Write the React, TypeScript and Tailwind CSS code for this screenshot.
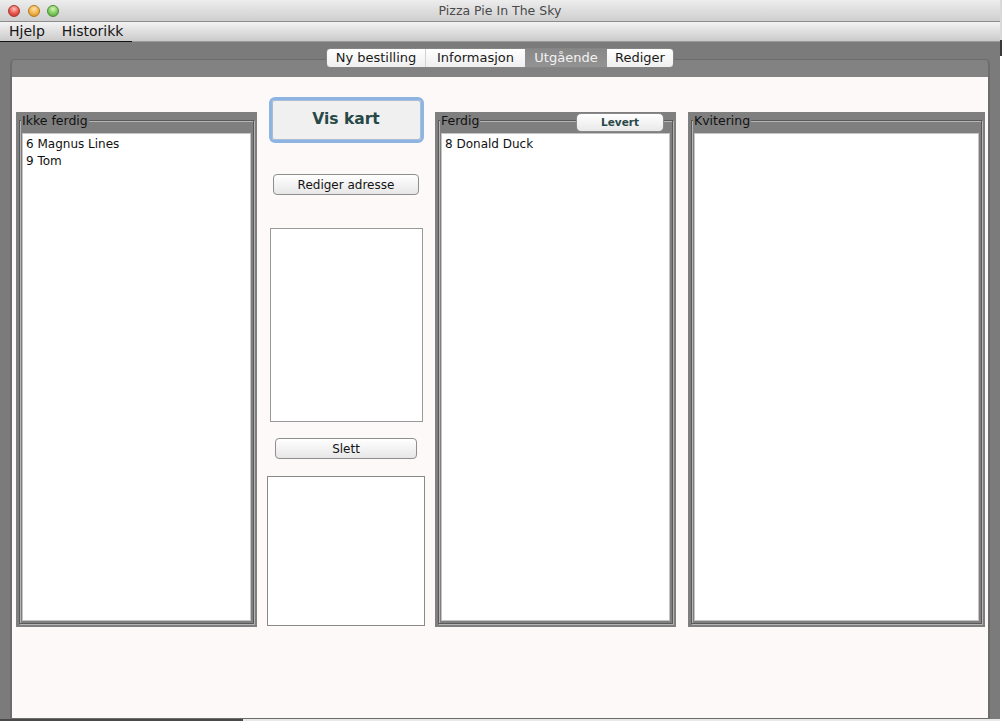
import React from "react";

function Light({ cls }: { cls: string }) {
  return <div className={`w-[12px] h-[12px] rounded-full ${cls}`} />;
}

function Panel({
  title,
  items,
  widthCls,
  listCls,
  children,
}: {
  title: string;
  items: string[];
  widthCls: string;
  listCls: string;
  children?: React.ReactNode;
}) {
  return (
    <div className={`relative mt-[35px] h-[515px] shrink-0 bg-[#7f7f7f] px-[3px] pt-[1px] ${widthCls}`}>
      <fieldset className="min-w-0 border border-[#5a5a5a] shadow-[inset_1px_1px_0_#b5b5b5,1px_1px_0_#b5b5b5] px-[2px] pt-[5px] pb-[2px]">
        <legend className="-ml-[1px] px-[1px] bg-[#7f7f7f] text-[12.5px] leading-[15px] text-[#121212]">
          {title}
        </legend>
        <div className={`h-[488px] bg-white border border-[#c4c4c4] px-[3px] pt-[2px] text-[12px] leading-[17px] text-[#111] ${listCls}`}>
          {items.map((it) => (
            <div key={it}>{it}</div>
          ))}
        </div>
      </fieldset>
      {children}
    </div>
  );
}

export default function App() {
  return (
    <div className="flex w-[1002px] h-[721px] overflow-hidden font-['DejaVu_Sans',sans-serif]">
      <div className="flex flex-col w-[1000px] h-full">
        {/* Title bar */}
        <div className="grid grid-cols-[1fr_auto_1fr] items-center h-[22px] border-b border-[#8c8c8c] bg-linear-to-b from-[#ededed] to-[#cfcfcf]">
          <div className="flex items-center gap-[7.5px] pl-[8px]">
            <Light cls="border border-[#a8382f] bg-[radial-gradient(circle_at_50%_30%,#ffc2bc_0%,#e8554c_55%,#b8322a_100%)]" />
            <Light cls="border border-[#b07a1e] bg-[radial-gradient(circle_at_50%_30%,#ffe2a8_0%,#f2b24a_55%,#c5861e_100%)]" />
            <Light cls="border border-[#4e8a34] bg-[radial-gradient(circle_at_50%_30%,#d2f5b8_0%,#7cc95c_55%,#4c9a32_100%)]" />
          </div>
          <div className="text-[12.5px] leading-[15px] text-[#4a4a4a]">Pizza Pie In The Sky</div>
          <div />
        </div>
        {/* Menu bar */}
        <div className="flex h-[20px] bg-linear-to-b from-[#f3f3f3] to-[#c8c8c8]">
          <div className="flex items-center w-[132px] h-full border-b border-[#111] text-[14px] text-[#161616] pl-[9px]">
            <span>Hjelp</span>
            <span className="ml-[17px]">Historikk</span>
          </div>
          <div className="flex-1 border-b border-[#9a9a9a]" />
        </div>
        {/* Body */}
        <div className="flex flex-col flex-1 bg-[#7b7b7b] px-[10px] pt-[6px]">
          <div className="relative z-10 flex justify-center h-[20px]">
            <div className="flex rounded-[4px] border border-[#858585] overflow-hidden bg-linear-to-b from-[#ffffff] to-[#efefef] text-[13px] text-[#1a1a1a]">
              <div className="w-[99px] flex items-center justify-center border-r border-[#d2d2d2]">Ny bestilling</div>
              <div className="w-[99px] flex items-center justify-center">Informasjon</div>
              <div className="w-[82px] flex items-center justify-center bg-linear-to-b from-[#888888] to-[#939393] text-[#f3f3f3]">Utgående</div>
              <div className="w-[66px] flex items-center justify-center">Rediger</div>
            </div>
          </div>
          <div className="-mt-[9px] flex flex-col flex-1 rounded-t-[5px] border-t border-b border-x-2 border-[#6c6c6c] bg-[#828282]">
            <div className="h-[17px]" />
            <div className="flex flex-1 items-start bg-[#fdf9f8] pl-[4px]">
              <Panel title="Ikke ferdig" items={["6 Magnus Lines", "9 Tom"]} widthCls="w-[241px]" listCls="" />
              <div className="ml-[10px] mt-[20px] w-[158px] shrink-0 flex flex-col items-center">
                <div className="w-[155px] h-[46px] rounded-[6px] border-[3px] border-[#8db4e2] bg-[#f0f0f0] shadow-[inset_0_0_0_1px_#a9bdd4] flex items-center justify-center text-[15.5px] font-bold text-[#284848]">
                  Vis kart
                </div>
                <div className="mt-[31px] w-[146px] h-[21px] rounded-[4px] border border-[#8e8e8e] bg-linear-to-b from-[#ffffff] to-[#e7e7e7] flex items-center justify-center text-[12px] text-[#141414]">
                  Rediger adresse
                </div>
                <div className="mt-[33px] w-[153px] h-[194px] border border-[#9a9a9a] bg-white" />
                <div className="mt-[16px] w-[142px] h-[21px] rounded-[4px] border border-[#8e8e8e] bg-linear-to-b from-[#ffffff] to-[#e7e7e7] flex items-center justify-center text-[12px] text-[#141414]">
                  Slett
                </div>
                <div className="mt-[17px] w-[158px] h-[150px] border border-[#8a8a8a] bg-white" />
              </div>
              <div className="ml-[10px]">
                <Panel title="Ferdig" items={["8 Donald Duck"]} widthCls="w-[241px]" listCls="">
                  <div className="absolute left-[141px] top-[1px] w-[88px] h-[19px] rounded-[5px] border border-[#8a8a8a] bg-linear-to-b from-[#ffffff] to-[#e9e9e9] flex items-center justify-center text-[10.5px] font-bold text-[#284848]">
                    Levert
                  </div>
                </Panel>
              </div>
              <div className="ml-[12px]">
                <Panel title="Kvitering" items={[]} widthCls="w-[297px]" listCls="" />
              </div>
            </div>
          </div>
        </div>
        <div className="flex h-[2px]">
          <div className="w-[243px] bg-[#4a4a4a]" />
          <div className="flex-1 bg-[#e8e8e8]" />
        </div>
      </div>
      <div className="flex flex-col w-[2px] h-full">
        <div className="h-[40px] bg-[#d9d9d9]" />
        <div className="h-[16px] bg-[#3a3a3a]" />
        <div className="flex-1 bg-white" />
      </div>
    </div>
  );
}
